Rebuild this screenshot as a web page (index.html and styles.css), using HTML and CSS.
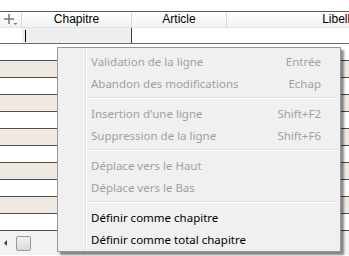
FILE: index.html
```html
<!DOCTYPE html>
<html lang="fr">

<head>
    <meta charset="UTF-8">
    <title>Grille</title>
    <link rel="stylesheet" href="styles.css">
</head>

<body>
    <div class="grid">
        <div class="top"></div>

        <div class="head">
            <div class="h-tool">
                <svg width="16" height="14" viewBox="0 0 16 14">
                    <path d="M7 1v10M2 6h10" stroke="#7a7a7a" stroke-width="1.6" fill="none"/>
                    <path d="M11.5 10h4l-2 2z" fill="#7a7a7a"/>
                </svg>
            </div>
            <div class="h-col c-chap">Chapitre</div>
            <div class="h-col c-art">Article</div>
            <div class="h-col c-lib">Libellé</div>
        </div>

        <div class="row first">
            <div class="cell c-tool"></div>
            <div class="cell c-chap edit"><span class="caret"></span></div>
            <div class="cell c-art"></div>
            <div class="cell c-lib"></div>
        </div>

        <div class="row"></div>
        <div class="row alt"></div>
        <div class="row"></div>
        <div class="row alt"></div>
        <div class="row"></div>
        <div class="row alt"></div>
        <div class="row"></div>
        <div class="row alt"></div>
        <div class="row"></div>
        <div class="row alt"></div>
        <div class="row"></div>

        <div class="hscroll">
            <span class="arrow"></span>
            <span class="thumb"></span>
        </div>
    </div>

    <div class="menu">
        <div class="item off"><span>Validation de la ligne</span><span class="key">Entrée</span></div>
        <div class="item off"><span>Abandon des modifications</span><span class="key">Echap</span></div>
        <div class="sep"></div>
        <div class="item off"><span>Insertion d'une ligne</span><span class="key">Shift+F2</span></div>
        <div class="item off"><span>Suppression de la ligne</span><span class="key">Shift+F6</span></div>
        <div class="sep"></div>
        <div class="item off"><span>Déplace vers le Haut</span></div>
        <div class="item off"><span>Déplace vers le Bas</span></div>
        <div class="sep"></div>
        <div class="item"><span>Définir comme chapitre</span></div>
        <div class="item"><span>Définir comme total chapitre</span></div>
    </div>
</body>

</html>
```

FILE: styles.css
```css
* {
    margin: 0;
    padding: 0;
    box-sizing: border-box;
}

body {
    width: 349px;
    height: 256px;
    overflow: hidden;
    background: #fff;
    font-family: 'Liberation Sans', Arial, sans-serif;
    font-size: 12px;
    color: #000;
    position: relative;
}

.grid {
    width: 349px;
    overflow: hidden;
}

.top {
    height: 12px;
    background: #fff;
    border-bottom: 1px solid #5a5a5a;
}

.head {
    display: flex;
    height: 16px;
    background: linear-gradient(#ffffff, #f1f2f4);
    border-bottom: 1px solid #e3e3e3;
    white-space: nowrap;
}

.h-tool {
    width: 22px;
    flex: none;
    padding: 1px 0 0 2px;
    border-right: 1px solid #d8d8d8;
}

.h-col {
    flex: none;
    text-align: center;
    line-height: 15px;
    border-right: 1px solid #d8d8d8;
}

.c-chap {
    width: 110px;
}

.c-art {
    width: 95px;
}

.c-lib {
    width: 226px;
}

.row {
    height: 17px;
    border-bottom: 1px solid #4e4e4e;
    background: #fff;
}

.row.alt {
    background: #efe9e1;
}

.row.first {
    display: flex;
    height: 16px;
    border-bottom-color: #6a6a6a;
}

.cell {
    flex: none;
    height: 100%;
}

.c-tool {
    width: 22px;
}

.cell.c-chap {
    border-right: 1px solid #404040;
}

.edit {
    background: #efefef;
    padding: 2px 0 0 3px;
}

.caret {
    display: block;
    width: 1px;
    height: 12px;
    background: #000;
}

.hscroll {
    display: flex;
    align-items: center;
    height: 24px;
    background: #f3f3f3;
    padding-left: 4px;
    gap: 9px;
}

.arrow {
    width: 0;
    height: 0;
    border-top: 3px solid transparent;
    border-bottom: 3px solid transparent;
    border-right: 3px solid #404040;
}

.thumb {
    width: 15px;
    height: 15px;
    border: 1px solid #9a9a9a;
    border-radius: 2px;
    background: linear-gradient(#f2f2f2, #d9d9d9);
}

.menu {
    position: absolute;
    left: 57px;
    top: 47px;
    width: 284px;
    padding: 2px 2px 1px;
    background: #f0f0f0 linear-gradient(to right, transparent 27px, #e2e3e3 27px, #e2e3e3 28px, #fff 28px, #fff 29px, transparent 29px);
    border: 1px solid #979797;
    box-shadow: 3px 3px 2px rgba(0, 0, 0, 0.45);
    font-family: 'Noto Sans', 'Open Sans', sans-serif;
    font-size: 11.5px;
}

.item {
    display: flex;
    justify-content: space-between;
    align-items: center;
    height: 22px;
    padding: 0 17px 0 31px;
    color: #000;
}

.item.off {
    color: #a0a0a0;
}

.sep {
    height: 8px;
    margin-left: 28px;
    background: linear-gradient(transparent 3px, #e0e0e0 3px, #e0e0e0 4px, #fff 4px, #fff 5px, transparent 5px);
}
```
